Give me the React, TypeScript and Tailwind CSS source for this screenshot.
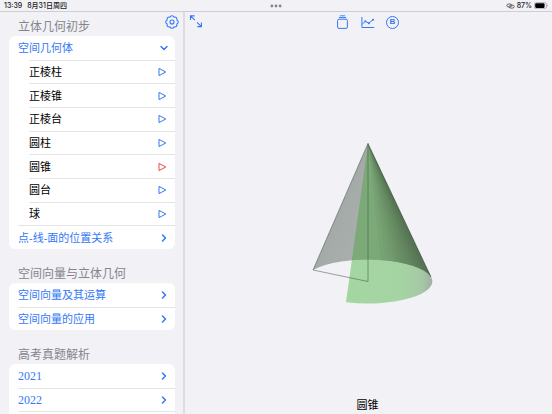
import { ChevronDown, ChevronRight } from "lucide-react";

interface Topic {
  label: string;
  year?: boolean;
}

const solids = ["正棱柱", "正棱锥", "正棱台", "圆柱", "圆锥", "圆台", "球"];

const vectorTopics: Topic[] = [
  { label: "空间向量及其运算" },
  { label: "空间向量的应用" },
];

const examTopics: Topic[] = [
  { label: "2021", year: true },
  { label: "2022", year: true },
];

// where each darker band of the cone's side starts, measured along y = 290
const shadeStarts = [384, 390, 395, 400, 404, 408, 412, 416, 420, 423, 426, 429, 431, 433];

function TopicRow({ label, year }: Topic) {
  return (
    <li className="ml-[9px] flex border-t border-[#e4e4e7] first:border-t-0">
      <button
        type="button"
        className="flex w-full items-center justify-between pr-[5px] text-left text-[#3478f6]"
      >
        <span className={year ? "font-['Liberation_Serif',serif] text-[12px]" : ""}>{label}</span>
        <ChevronRight className="h-3 w-3" strokeWidth={3} />
      </button>
    </li>
  );
}

function SolidRow({ label, active }: { label: string; active: boolean }) {
  return (
    <li className="ml-5 flex border-t border-[#e4e4e7]">
      <button
        type="button"
        className="flex w-full items-center justify-between pr-2 text-left text-black"
      >
        <span>{label}</span>
        <svg
          viewBox="0 0 10 10"
          fill="none"
          className={active ? "h-[10px] w-[10px] text-[#eb4e3d]" : "h-[10px] w-[10px] text-[#3478f6]"}
          aria-hidden="true"
        >
          <path d="M2 1.4v7.2L8.8 5z" stroke="currentColor" strokeWidth="1" strokeLinejoin="round" />
        </svg>
      </button>
    </li>
  );
}

function SectionTitle({ children }: { children: string }) {
  return (
    <h2 className="pl-[9px] text-[12px] leading-[18px] text-[#85858b]">{children}</h2>
  );
}

function StatusBar() {
  return (
    <header className="grid h-3 shrink-0 grid-cols-3 items-center border-b border-[#cfcfd3] px-1 font-[Inter,'Noto_Sans_CJK_SC',sans-serif] text-[7px] leading-[11px] font-medium text-[#222]">
      <div className="flex gap-[5px]">
        <span>13:39</span>
        <span>8月31日周四</span>
      </div>
      <svg viewBox="0 0 12 4" className="h-1 w-3 justify-self-center" aria-hidden="true">
        <circle cx="1.9" cy="2" r="1.4" fill="#85858a" />
        <circle cx="6" cy="2" r="1.4" fill="#85858a" />
        <circle cx="10.1" cy="2" r="1.4" fill="#85858a" />
      </svg>
      <div className="flex items-center justify-end gap-[2px]">
        <svg viewBox="0 0 9 6" fill="none" stroke="#444" strokeWidth="0.8" className="h-[6px] w-[9px]" aria-hidden="true">
          <ellipse cx="3.3" cy="2.5" rx="2.5" ry="1.6" />
          <ellipse cx="5.7" cy="3.6" rx="2.5" ry="1.6" />
        </svg>
        <span>87%</span>
        <svg viewBox="0 0 14 7" className="h-[7px] w-[14px]" aria-hidden="true">
          <rect x="0.4" y="0.6" width="12" height="6" rx="1.8" fill="none" stroke="#8a8a8e" strokeWidth="0.6" />
          <rect x="1.2" y="1.3" width="9.4" height="4.6" rx="1.1" fill="#000" />
          <path d="M12.9 2.6v2q.8-.3.8-1t-.8-1z" fill="#8a8a8e" />
        </svg>
      </div>
    </header>
  );
}

function Sidebar() {
  return (
    <nav className="w-[185px] shrink-0 overflow-hidden border-r-2 border-[#dcdce1] pr-2 pl-[9px] text-[11px] leading-[16px]">
      {/* Section 1 */}
      <div className="flex h-6 items-end justify-between">
        <SectionTitle>立体几何初步</SectionTitle>
        <button type="button" aria-label="设置" className="-mr-1 self-start pt-[3px] text-[#3478f6]">
          <svg viewBox="0 0 14 14" fill="none" stroke="currentColor" className="h-[14px] w-[14px]" aria-hidden="true">
            <path
              d="M11.8 9A2.1 2.1 0 0 1 9 11.8A2.1 2.1 0 0 1 5 11.8A2.1 2.1 0 0 1 2.2 9A2.1 2.1 0 0 1 2.2 5A2.1 2.1 0 0 1 5 2.2A2.1 2.1 0 0 1 9 2.2A2.1 2.1 0 0 1 11.8 5A2.1 2.1 0 0 1 11.8 9z"
              strokeWidth="1.1"
              strokeLinejoin="round"
            />
            <circle cx="7" cy="7" r="2" strokeWidth="1.1" />
          </svg>
        </button>
      </div>
      <ul className="grid h-[213px] auto-rows-fr rounded-md bg-white">
        <li className="ml-[9px] flex">
          <button
            type="button"
            aria-expanded="true"
            className="flex w-full items-center justify-between pr-[5px] text-left text-[#3478f6]"
          >
            <span>空间几何体</span>
            <ChevronDown className="h-3 w-3" strokeWidth={3} />
          </button>
        </li>
        {solids.map((name) => (
          <SolidRow key={name} label={name} active={name === "圆锥"} />
        ))}
        <TopicRow label="点-线-面的位置关系" />
      </ul>

      {/* Section 2 */}
      <div className="pt-4">
        <SectionTitle>空间向量与立体几何</SectionTitle>
        <ul className="grid h-[47px] auto-rows-fr rounded-md bg-white">
          {vectorTopics.map((topic) => (
            <TopicRow key={topic.label} {...topic} />
          ))}
        </ul>
      </div>

      {/* Section 3 */}
      <div className="pt-4">
        <SectionTitle>高考真题解析</SectionTitle>
        <ul className="grid h-[71px] auto-rows-fr rounded-md bg-white">
          {examTopics.map((topic) => (
            <TopicRow key={topic.label} {...topic} />
          ))}
          <li className="ml-[9px] border-t border-[#e4e4e7]" aria-hidden="true" />
        </ul>
      </div>
    </nav>
  );
}

function Toolbar() {
  return (
    <div className="grid grid-cols-3 items-center px-1 pt-[2px] text-[#3478f6]">
      <button type="button" aria-label="全屏" className="justify-self-start">
        <svg viewBox="0 0 14 14" fill="none" stroke="currentColor" strokeWidth="1.1" className="h-[14px] w-[14px]" aria-hidden="true">
          <path d="M1.5 4.9V.9h4.1M1.5.9l4.4 4.2M8 7.4l4.4 4.2M12.4 7.6v4H8.3" />
        </svg>
      </button>
      <div className="flex items-center gap-[11px] justify-self-center">
        <button type="button" aria-label="模型">
          <svg viewBox="0 0 14 16" fill="none" stroke="currentColor" strokeWidth="1" className="h-4 w-[14px]" aria-hidden="true">
            <rect x="1.6" y="5.2" width="9.8" height="9.2" rx="1.4" />
            <path d="M2.9 3.5h7.2M3.9 1.8h5.2" strokeWidth="0.9" />
          </svg>
        </button>
        <button type="button" aria-label="图表">
          <svg viewBox="0 0 14 14" fill="none" stroke="currentColor" strokeWidth="1" className="h-[14px] w-[14px]" aria-hidden="true">
            <path d="M.9 2v10.5h12.3M1.2 9.4l3-3 3.6 1.8L12 4.7" />
            <g fill="currentColor" stroke="none">
              <circle cx="4.3" cy="6.3" r="1" />
              <circle cx="7.9" cy="8.2" r="1" />
              <circle cx="12" cy="4.7" r="1" />
            </g>
          </svg>
        </button>
        <button
          type="button"
          className="flex h-[13px] w-[13px] items-center justify-center rounded-full border border-[#3478f6] text-[8px] leading-none font-bold"
        >
          B
        </button>
      </div>
    </div>
  );
}

function Cone() {
  return (
    <svg viewBox="302 140 132 166" className="h-[166px] w-[132px]" role="img" aria-label="圆锥">
      <defs>
        <linearGradient id="lateral" gradientUnits="userSpaceOnUse" x1="322" y1="220" x2="372" y2="242">
          <stop offset="0" stopColor="#9ea4a2" />
          <stop offset="0.3" stopColor="#a5aba8" />
          <stop offset="1" stopColor="#aab1ad" />
        </linearGradient>
        <linearGradient id="section" gradientUnits="userSpaceOnUse" x1="346" y1="0" x2="433" y2="0">
          <stop offset="0" stopColor="#a4d6a2" />
          <stop offset="0.65" stopColor="#a4d4a2" />
          <stop offset="0.88" stopColor="#a5c7a5" />
          <stop offset="1" stopColor="#a3aca7" />
        </linearGradient>
        <clipPath id="side">
          <path d="M368 143.5L313 270A64.5 22 0 0 1 431 277z" />
        </clipPath>
        <clipPath id="sector">
          <path d="M368 143.5L346 302.2A64.5 22 0 0 0 431 277z" />
        </clipPath>
      </defs>
      <path d="M346 302.2A64.5 22 0 0 0 431 277L368 143.5z" fill="url(#section)" />
      <path d="M368 143.5L313 270A64.5 22 0 0 1 431 277z" fill="url(#lateral)" />
      <path
        d="M368 143.5L313 270A64.5 22 0 0 1 431 277z"
        fill="#7ba977"
        clipPath="url(#sector)"
      />
      <g clipPath="url(#side)" fill="#2a2e2c" fillOpacity="0.032">
        {shadeStarts.map((x) => (
          <path key={x} d={`M368 143.5L${x} 290H440z`} />
        ))}
      </g>
      <path d="M368 143.5L313 270L368 281.5z" fill="none" stroke="#4d5b4f" strokeOpacity="0.8" strokeWidth="0.7" />
      <path d="M368 143.5L431 277" stroke="#465348" strokeWidth="0.6" />
    </svg>
  );
}

export default function App() {
  return (
    <div className="flex h-screen flex-col overflow-hidden bg-[#f1f1f6] font-['Liberation_Sans','Noto_Sans_CJK_SC',sans-serif]">
      <StatusBar />
      <div className="flex min-h-0 flex-1">
        <Sidebar />
        <main className="flex flex-1 flex-col pr-[2px]">
          <Toolbar />
          <div className="flex flex-1 items-center justify-center pt-[18px]">
            <Cone />
          </div>
          <p className="pb-[1px] text-center text-[11px] leading-[16px] text-black">圆锥</p>
        </main>
      </div>
    </div>
  );
}
